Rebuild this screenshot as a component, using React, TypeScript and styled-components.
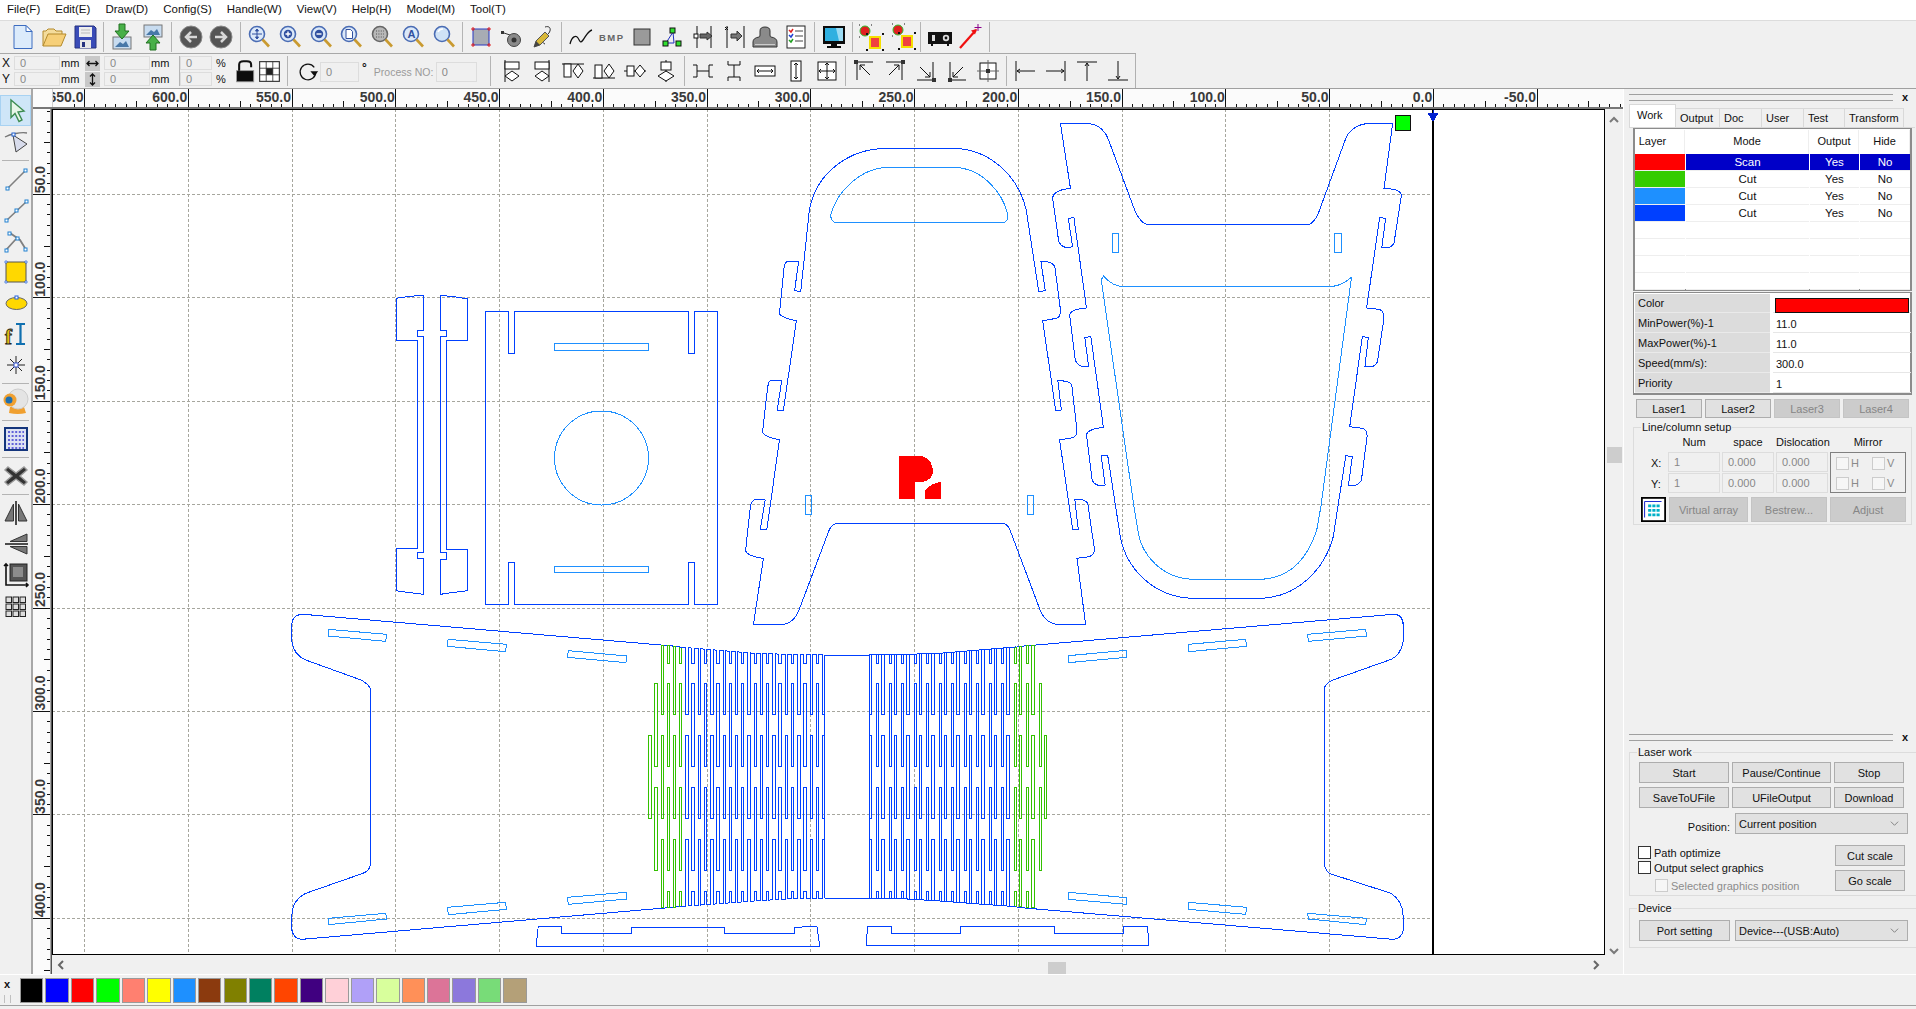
import React from "react";
import styled, { createGlobalStyle } from "styled-components";

const GlobalStyle = createGlobalStyle`
  html, body { margin: 0; padding: 0; background: #f0f0f0; overflow: hidden; }
  body { font-family: "Liberation Sans", Arial, sans-serif; font-size: 11px; color: #111; }
  * { box-sizing: border-box; }
`;

const Page = styled.div`
  width: 1916px;
  height: 1009px;
  display: flex;
  flex-direction: column;
  overflow: hidden;
`;

/* ---------- menu + toolbars ---------- */

const MenuBar = styled.div`
  height: 21px;
  background: #fff;
  display: flex;
  align-items: center;
  gap: 15px;
  padding: 0 0 2px 7px;
  font-size: 11.5px;
  border-bottom: 1px solid #dcdcdc;
`;

const ToolRow = styled.div`
  height: 33px;
  width: 1136px;
  display: flex;
  align-items: center;
  padding-left: 7.6px;
  border-bottom: 1px solid #a8a8a8;
`;

const PropRow = styled.div`
  height: 34px;
  width: 1136px;
  display: flex;
  align-items: center;
  border-right: 1px solid #b0b0b0;
`;

const IconCell = styled.div<{ $w?: number }>`
  width: ${(p) => p.$w ?? 30.8}px;
  height: 30px;
  flex: none;
  display: flex;
  align-items: center;
  justify-content: center;
`;

const BarSep = styled.div<{ $w?: number }>`
  width: ${(p) => p.$w ?? 6.8}px;
  height: 30px;
  flex: none;
  display: flex;
  justify-content: center;
  &::after {
    content: "";
    width: 1px;
    background: #b4b4b4;
  }
`;

const CoordGrid = styled.div`
  width: 178px;
  flex: none;
  display: grid;
  grid-template-columns: 14px 46px 25px 19px 46px 28px;
  grid-auto-rows: 16px;
  align-items: center;
`;

const CoordLabel = styled.span`
  font-size: 12px;
  padding-left: 2px;
`;

const FlatInput = styled.div<{ $h?: number; $w?: number }>`
  height: ${(p) => p.$h ?? 14}px;
  ${(p) => (p.$w ? `width: ${p.$w}px; flex: none;` : "")}
  background: #f0f0f0;
  border: 1px solid #dddddd;
  color: #888;
  font-size: 11px;
  padding-left: 5px;
  display: flex;
  align-items: center;
`;

const Unit = styled.span`
  font-size: 11px;
  padding-left: 1px;
`;

const Toggle = styled.div`
  width: 15px;
  height: 15px;
  background: #c8c8c8;
  display: flex;
  align-items: center;
  justify-content: center;
  font-size: 11px;
  font-weight: 700;
`;

const PercentGrid = styled.div`
  width: 54px;
  flex: none;
  display: grid;
  grid-template-columns: 32px 22px;
  grid-auto-rows: 16px;
  align-items: center;
`;

const Percent = styled.span`
  padding-left: 4px;
  font-size: 11px;
`;

const RotateGroup = styled.div`
  width: 193px;
  flex: none;
  display: flex;
  align-items: center;
  padding-left: 3px;
  padding-top: 2px;
`;

const Degree = styled.span`
  font-size: 12px;
  margin: -8px 7px 0 3px;
  font-weight: 700;
`;

const ProcessLabel = styled.span`
  color: #9a9a9a;
  white-space: nowrap;
  width: 62px;
  flex: none;
  font-size: 10.5px;
`;

/* ---------- main work area ---------- */

const Main = styled.div`
  height: 886px;
  display: flex;
  border-top: 1px solid #a0a0a0;
`;

const SideBar = styled.div`
  width: 33px;
  flex: none;
  border-right: 2px solid #a8a8a8;
  padding-top: 6px;
  display: flex;
  flex-direction: column;
`;

const SideButton = styled.div<{ $active?: boolean }>`
  height: 31px;
  width: 31px;
  flex: none;
  display: flex;
  align-items: center;
  justify-content: center;
  background: ${(p) => (p.$active ? "#cfe6f8" : "transparent")};
  border: ${(p) => (p.$active ? "1px solid #a8d2f2" : "none")};
`;

const SideSep = styled.div`
  height: 1px;
  flex: none;
  margin: 2.5px 2px;
  background: #b4b4b4;
`;

const Workspace = styled.div`
  width: 1590px;
  flex: none;
  display: grid;
  grid-template-columns: 19px 1553px 18px;
  grid-template-rows: 20px 846px 19px;
`;

const TopRuler = styled.svg`
  grid-column: 1 / 4;
  display: block;
  background: #fbfbfb;
`;

const LeftRuler = styled.svg`
  grid-row: 2 / 4;
  display: block;
  background: #fbfbfb;
`;

const CanvasSvg = styled.svg`
  display: block;
  background: #fff;
`;

const VScroll = styled.div`
  display: flex;
  flex-direction: column;
  align-items: center;
  padding: 6px 0 18px;
  height: 865px;
  grid-row: 2 / 4;
  grid-column: 3;
`;

const VThumb = styled.div`
  width: 15px;
  height: 16px;
  background: #cdcdcd;
  margin: 322px 0 auto;
`;

const HScroll = styled.div`
  display: flex;
  align-items: center;
  padding: 0 4px;
  grid-column: 2;
  grid-row: 3;
`;

const HThumb = styled.div`
  width: 18px;
  height: 12px;
  background: #cdcdcd;
  margin: 7px auto 0 982px;
  align-self: flex-start;
`;

/* ---------- right hand docks ---------- */

const Dock = styled.div`
  width: 293px;
  flex: none;
  border-left: 1px solid #fff;
  display: flex;
  flex-direction: column;
  height: 886px;
  border-bottom: 1px solid #a0a0a0;
`;

const DockPane = styled.div<{ $h: number }>`
  height: ${(p) => p.$h}px;
  flex: none;
  padding-left: 5px;
`;

const Grip = styled.div`
  height: 16px;
  display: flex;
  align-items: center;
  position: relative;
  &::before {
    content: "";
    flex: 1;
    height: 5px;
    margin-right: 9px;
    border-top: 1px solid #a0a0a0;
    border-bottom: 1px solid #a0a0a0;
  }
`;

const CloseMark = styled.span`
  font-weight: 700;
  font-size: 11px;
  width: 14px;
  line-height: 10px;
`;

const TabStrip = styled.div`
  display: flex;
  align-items: flex-end;
  height: 23px;
  border-bottom: 1px solid #d9d9d9;
  margin-right: 1px;
`;

const Tab = styled.div<{ $w: number; $active?: boolean }>`
  width: ${(p) => p.$w}px;
  height: ${(p) => (p.$active ? 23 : 19)}px;
  background: ${(p) => (p.$active ? "#fff" : "#f0f0f0")};
  border: 1px solid #d9d9d9;
  border-bottom: none;
  margin-right: -1px;
  padding-left: ${(p) => (p.$active ? 7 : 4)}px;
  line-height: ${(p) => (p.$active ? 20 : 18)}px;
  font-size: 11px;
`;

const TableFrame = styled.div`
  margin: 0 0 0 4px;
  width: 279px;
  height: 163px;
  border: 2px solid #8c8c8c;
  border-top-width: 1px;
  background: #fff;
  display: grid;
  grid-template-columns: 50px 123px 49px 50px;
  column-gap: 1px;
  grid-template-rows: 24px repeat(8, 17px);
  padding-top: 1px;
`;

const HeadCell = styled.div<{ $lead?: boolean }>`
  display: flex;
  align-items: center;
  justify-content: center;
  font-size: 11px;
  border-right: 1px solid #eee;
  padding-bottom: 2px;
  padding-right: ${(p) => (p.$lead ? 14 : 0)}px;
`;

const BodyCell = styled.div<{ $sel?: boolean; $color?: string }>`
  display: flex;
  align-items: center;
  justify-content: center;
  font-size: 11.5px;
  margin-bottom: 1px;
  background: ${(p) => p.$color ?? (p.$sel ? "#0000c8" : "#fff")};
  color: ${(p) => (p.$sel ? "#fff" : "#111")};
  box-shadow: 0 1px 0 #eeeeee;
`;

const PropFrame = styled.div`
  margin: 1px 0 0 4px;
  width: 279px;
  height: 103px;
  border: 2px solid #8c8c8c;
  border-top-width: 1px;
  border-left-width: 1px;
  background: #fff;
  display: grid;
  grid-template-columns: 135px 138px;
  column-gap: 3px;
  grid-template-rows: 19px repeat(4, 20px);
  padding: 1px 0 0 1px;
`;

const PropLabel = styled.div`
  background: #dcdcdc;
  display: flex;
  align-items: center;
  padding-left: 3px;
  font-size: 11px;
  border-bottom: 1px solid #eaeaea;
`;

const PropValue = styled.div`
  display: flex;
  align-items: center;
  padding: 3px 0 0 3px;
  font-size: 11px;
  border-bottom: 1px solid #e6e6e6;
`;

const ColorBar = styled.div`
  width: 134px;
  height: 15px;
  margin: 1px 0 0 -1px;
  background: #ff0000;
  border: 1px solid #111;
`;

const LaserRow = styled.div`
  display: flex;
  gap: 3px;
  margin: 4px 0 0 7px;
`;

const PanelButton = styled.div<{ $w?: number; $h?: number; $off?: boolean }>`
  ${(p) => (p.$w ? `width: ${p.$w}px; flex: none;` : "")}
  height: ${(p) => p.$h ?? 21}px;
  background: ${(p) => (p.$off ? "#cccccc" : "#e1e1e1")};
  border: 1px solid ${(p) => (p.$off ? "#c4c4c4" : "#adadad")};
  color: ${(p) => (p.$off ? "#868686" : "#111")};
  display: flex;
  align-items: center;
  justify-content: center;
  font-size: 11px;
  white-space: nowrap;
`;

const GroupBox = styled.fieldset<{ $h: number; $w: number; $top: number; $left?: number }>`
  margin: ${(p) => p.$top}px 0 0 ${(p) => p.$left ?? 0}px;
  padding: 0;
  width: ${(p) => p.$w}px;
  height: ${(p) => p.$h}px;
  border: 1px solid #dcdcdc;
  min-width: 0;
`;

const GroupTitle = styled.legend`
  margin-left: 7px;
  padding: 0 1px;
  font-size: 11px;
  line-height: 12px;
`;

const SetupGrid = styled.div`
  display: grid;
  grid-template-columns: 32px 52px 52px 52px 76px;
  column-gap: 2px;
  grid-template-rows: 15px 20px 20px;
  row-gap: 1px;
  padding-top: 3px;
`;

const ColTitle = styled.div`
  text-align: center;
  font-size: 11px;
`;

const RowMark = styled.div`
  font-size: 11px;
  padding: 5px 0 0 17px;
`;

const MirrorBox = styled.div`
  grid-column: 5;
  grid-row: 2 / 4;
  border: 1px solid #808080;
  display: grid;
  grid-template-columns: 36px 36px;
  grid-template-rows: 20px 20px;
  padding-left: 5px;
  align-items: center;
`;

const MirrorItem = styled.div`
  display: flex;
  align-items: center;
  gap: 2px;
  color: #8a8a8a;
  font-size: 11px;
`;

const CheckBox = styled.div<{ $off?: boolean }>`
  width: 13px;
  height: 13px;
  flex: none;
  background: ${(p) => (p.$off ? "#f6f6f6" : "#fff")};
  border: 1px solid ${(p) => (p.$off ? "#cccccc" : "#333")};
`;

const ArrayRow = styled.div`
  display: flex;
  align-items: center;
  margin: 4px 0 0 7px;
  gap: 3px;
`;

const ArrayIcon = styled.div`
  width: 26px;
  height: 25px;
  flex: none;
  margin-right: -1px;
`;

const WorkGrid = styled.div`
  display: grid;
  grid-template-columns: 90px 99px 70px;
  grid-auto-rows: 21px;
  gap: 4px 3px;
  margin: 4px 0 0 9px;
`;

const PositionRow = styled.div`
  display: flex;
  align-items: center;
  margin-top: 5px;
  height: 21px;
`;

const PositionLabel = styled.div`
  width: 100px;
  text-align: right;
  font-size: 11px;
  padding-top: 6px;
`;

const SelectBox = styled.div`
  width: 173px;
  height: 21px;
  margin-left: 5px;
  flex: none;
  background: #e1e1e1;
  border: 1px solid #adadad;
  display: flex;
  align-items: center;
  justify-content: space-between;
  padding: 0 8px 0 3px;
  font-size: 11px;
`;

const ScaleArea = styled.div`
  display: flex;
  justify-content: space-between;
  margin: 11px 0 0 8px;
  width: 267px;
`;

const CheckColumn = styled.div`
  display: flex;
  flex-direction: column;
`;

const CheckLine = styled.div<{ $off?: boolean; $indent?: boolean }>`
  display: flex;
  align-items: center;
  gap: 3px;
  height: 15px;
  font-size: 11px;
  color: ${(p) => (p.$off ? "#8c8c8c" : "#111")};
  ${(p) => (p.$indent ? "margin: 3px 0 0 17px;" : "")}
`;

const ScaleColumn = styled.div`
  display: flex;
  flex-direction: column;
  gap: 4px;
`;

const DeviceRow = styled.div`
  display: flex;
  margin: 6px 0 0 9px;
`;

/* ---------- colour palette ---------- */

const BottomBar = styled.div`
  height: 32px;
  display: flex;
  align-items: flex-start;
  border-top: 1px solid #fff;
  border-bottom: 1px solid #a0a0a0;
  flex: none;
`;

const PaletteGrip = styled.div`
  width: 20px;
  flex: none;
  padding: 4px 0 0 4px;
  font-weight: 700;
  font-size: 11px;
  line-height: 10px;
  &::after {
    content: "";
    display: block;
    width: 5px;
    height: 8px;
    margin-top: 6px;
    border-left: 1px solid #c0c0c0;
    border-right: 1px solid #c0c0c0;
  }
`;

const Swatches = styled.div`
  display: grid;
  grid-template-columns: repeat(20, 23.4px);
  column-gap: 2.05px;
  margin-top: 3px;
`;

const Swatch = styled.div<{ $c: string }>`
  height: 25px;
  background: ${(p) => p.$c};
  border: 1px solid #9a9a9a;
`;

/* ---------- icons ---------- */

const IconSvg = styled.svg`
  display: block;
`;

const Ic = ({ s = 28, children }: { s?: number; children: React.ReactNode }) => (
  <IconSvg width={s} height={s} viewBox="0 0 28 28">
    {children}
  </IconSvg>
);

const Mag = ({ children, lens = "#dbe8f8", ring = "#4a6cb4" }: { children?: React.ReactNode; lens?: string; ring?: string }) => (
  <Ic>
    <circle cx="12" cy="11" r="7.5" fill={lens} stroke={ring} strokeWidth="1.6" />
    <line x1="17.5" y1="16.5" x2="24" y2="23.5" stroke="#c99a30" strokeWidth="2.6" />
    {children}
  </Ic>
);

const L = ({ d, w = 1, c = "#111" }: { d: string; w?: number; c?: string }) => (
  <path d={d} fill="none" stroke={c} strokeWidth={w} />
);

const Apple = ({ x, y }: { x: number; y: number }) => (
  <g transform={`translate(${x} ${y})`}>
    <circle cx="6" cy="7" r="5" fill="#e02020" stroke="#30c030" strokeWidth="1" />
    <path d="M0 1h1M12 1h1M0 13h1" stroke="#111" />
  </g>
);

const Selected = ({ x, y }: { x: number; y: number }) => (
  <g transform={`translate(${x} ${y})`}>
    <rect x="0" y="0" width="10" height="11" fill="#f04040" stroke="#f5e000" strokeWidth="2" />
    <path d="M-4 -3h2M12 -3h2M-4 13h2M12 13h2" stroke="#111" strokeWidth="2" />
  </g>
);

const topIcons: React.ReactNode[][] = [
  [
    <Ic key="new"><path d="M5 2.5h12l6 6v17H5z" fill="#dcebfb" stroke="#3c6cc0" /><path d="M17 2.5v6h6z" fill="#fff" stroke="#3c6cc0" /></Ic>,
    <Ic key="open"><path d="M3 23V8h3l2-2h6l2 2h6v3" fill="#f4dc9c" stroke="#b48a2c" /><path d="M3 23l5-12h18l-5 12z" fill="#f6cf78" stroke="#b48a2c" /></Ic>,
    <Ic key="save"><path d="M4 3h19l2 2v20H4z" fill="#3a4cb8" stroke="#26337f" /><rect x="8" y="4" width="13" height="10" fill="#eeeeee" /><path d="M10 7h9M10 10h9" stroke="#bbb" /><rect x="9" y="17" width="11" height="8" fill="#e8e8e8" /><rect x="11" y="19" width="3" height="5" fill="#26337f" /></Ic>,
  ],
  [
    <Ic key="imp"><rect x="5" y="14" width="18" height="12" fill="#c8dcf0" stroke="#777" /><path d="M7 24l5-5 3 2 3-3 3 6z" fill="#4878a8" /><path d="M11 1h6v7h4l-7 8-7-8h4z" fill="#48b048" stroke="#207020" /></Ic>,
    <Ic key="exp"><rect x="5" y="2" width="18" height="12" fill="#c8dcf0" stroke="#777" /><path d="M7 12l5-5 3 2 3-3 3 6z" fill="#4878a8" /><path d="M11 27v-7H7l7-8 7 8h-4v7z" fill="#48b048" stroke="#207020" /></Ic>,
  ],
  [
    <Ic key="back"><circle cx="14" cy="14" r="11" fill="#555" stroke="#8a8a8a" /><path d="M20 14H10M14 9l-5 5 5 5" fill="none" stroke="#d8d8d8" strokeWidth="2.5" /></Ic>,
    <Ic key="fwd"><circle cx="14" cy="14" r="11" fill="#555" stroke="#8a8a8a" /><path d="M8 14h10M14 9l5 5-5 5" fill="none" stroke="#d8d8d8" strokeWidth="2.5" /></Ic>,
  ],
  [
    <Mag key="z1"><path d="M12 6v10M7 11h10M12 6l-1.5 2h3zM12 16l-1.5-2h3z" stroke="#3050a0" fill="#3050a0" /></Mag>,
    <Mag key="z2"><circle cx="12" cy="11" r="4.2" fill="#3050a0" /><path d="M12 8.5v5M9.5 11h5" stroke="#fff" strokeWidth="1.4" /></Mag>,
    <Mag key="z3"><circle cx="12" cy="11" r="4.2" fill="#3050a0" /><path d="M9.5 11h5" stroke="#fff" strokeWidth="1.4" /></Mag>,
    <Mag key="z4"><path d="M9 6.5h4.5l2 2V15.5H9z" fill="#fff" stroke="#3050a0" /></Mag>,
    <Mag key="z5" lens="#b8b8b8" ring="#666"><path d="M8 8h8M8 11h8M8 14h8" stroke="#555" strokeDasharray="1 1.4" /></Mag>,
    <Mag key="z6"><text x="8.4" y="15" fontSize="11" fontWeight="700" fontFamily="Liberation Sans" fill="#3050a0">A</text></Mag>,
    <Mag key="z7" lens="#cfe2f6"><path d="M8 9a5 5 0 0 1 5-3" stroke="#fff" fill="none" strokeWidth="1.5" /></Mag>,
  ],
  [
    <Ic key="rect"><rect x="6" y="6" width="16" height="16" fill="#a8acb4" stroke="#2838c0" /><path d="M4 6h4M6 4v4M20 6h4M22 4v4M4 22h4M6 20v4M20 22h4M22 20v4" stroke="#e02020" /></Ic>,
    <Ic key="cam"><rect x="3" y="8" width="3" height="3" fill="#333" /><path d="M6 10l6 2" stroke="#333" /><circle cx="16" cy="17" r="6.5" fill="#8a8a8a" stroke="#444" /><circle cx="16" cy="17" r="2.5" fill="#333" /></Ic>,
    <Ic key="pen"><path d="M16 4c6-2 7 4 2 8-4 3-6 8-2 9" fill="none" stroke="#333" /><path d="M5 24l2-6 9-9 4 4-9 9z" fill="#d8b838" stroke="#555" /><path d="M5 24l2-6 4 4z" fill="#444" /></Ic>,
  ],
  [
    <Ic key="curve"><L d="M3 21c2-8 6-9 8-6s2 6 5 2 5-9 9-10" w={1.3} /></Ic>,
    <Ic key="bmp"><text x="2" y="18" fontSize="9.5" fontWeight="700" fontFamily="Liberation Sans" fill="#666" textLength="24">BMP</text></Ic>,
    <Ic key="gray"><rect x="6" y="6" width="16" height="16" fill="#9a9a9a" stroke="#333" /></Ic>,
    <Ic key="tree"><path d="M14 9l-7 11M14 9l1 11M15 20h-8" fill="none" stroke="#2030c0" /><rect x="11" y="5" width="5" height="5" fill="#30e030" stroke="#111" /><rect x="4" y="18" width="5" height="5" fill="#30e030" stroke="#111" /><rect x="17" y="18" width="5" height="5" fill="#30e030" stroke="#111" /></Ic>,
    <Ic key="dist1"><L d="M7 3v22M21 3v22" /><rect x="4" y="11" width="4" height="4" fill="#fff" stroke="#111" /><path d="M10 11h7v-2l5 4-5 4v-2h-7z" fill="#666" stroke="#333" /></Ic>,
    <Ic key="dist2"><L d="M6 3v22M23 3v22" /><path d="M4 4l3 3M7 4l-3 3" stroke="#111" /><path d="M10 11h6v-3l5 5-5 5v-3h-6z" fill="#777" stroke="#333" /></Ic>,
    <Ic key="stamp"><path d="M2 24v-5q0-4 6-5 1 0 1-2V8q0-4 5-4t5 4v4q0 2 1 2 6 1 6 5v5z" fill="#8a8a8a" stroke="#333" /><rect x="4" y="21" width="20" height="1" fill="#ccc" /></Ic>,
    <Ic key="list"><rect x="5" y="3" width="18" height="22" fill="#fff" stroke="#222" /><path d="M13 8h8M13 13h8M13 18h8" stroke="#444" /><path d="M7 7l2 2 2-3" fill="none" stroke="#e02020" strokeWidth="1.5" /><path d="M7 12l2 2 2-3" fill="none" stroke="#2040d0" strokeWidth="1.5" /><path d="M7 17l2 2 2-3" fill="none" stroke="#20a020" strokeWidth="1.5" /></Ic>,
  ],
  [
    <Ic key="mon"><rect x="3" y="3" width="22" height="18" fill="#0c0c0c" /><rect x="5" y="5" width="18" height="13" fill="#30b0e0" /><path d="M16 5l3 13h4V5z" fill="#9cdcf4" /><path d="M11 21h6v2h4v2H7v-2h4z" fill="#0c0c0c" /></Ic>,
  ],
  [
    <Ic key="ap1"><Apple x={2} y={1} /><Selected x={13} y={14} /></Ic>,
    <Ic key="ap2"><Apple x={4} y={0} /><Selected x={14} y={13} /></Ic>,
  ],
  [
    <Ic key="proj"><path d="M2 9h24v12H2z" fill="#111" /><rect x="6" y="12" width="3" height="6" fill="#ddd" /><circle cx="20" cy="15" r="3.2" fill="#ddd" /><circle cx="20" cy="15" r="1.4" fill="#111" /><path d="M6 21v2M22 21v2" stroke="#111" strokeWidth="2" /></Ic>,
    <Ic key="laser"><path d="M4 25L20 7" stroke="#f01010" strokeWidth="2.2" /><path d="M21 6l-6 1.5 4 4z" fill="#f01010" /><path d="M22 1v7M18.5 4.5h7" stroke="#8b008b" /></Ic>,
  ],
];

const alignIcons: React.ReactNode[][] = [
  [
    <Ic key="a1"><L d="M8 3v22" /><rect x="8" y="5" width="14" height="7" fill="#fff" stroke="#111" /><path d="M8 19l7-5 7 5-7 5z" fill="#fff" stroke="#111" /></Ic>,
    <Ic key="a2"><L d="M21 3v22" /><rect x="7" y="5" width="14" height="7" fill="#fff" stroke="#111" /><path d="M7 19l7-5 7 5-7 5z" fill="#fff" stroke="#111" /></Ic>,
    <Ic key="a3"><L d="M3 7h22" /><rect x="5" y="7" width="7" height="13" fill="#fff" stroke="#111" /><path d="M19 7l5 7-5 7-5-7z" fill="#fff" stroke="#111" /></Ic>,
    <Ic key="a4"><L d="M3 21h22" /><rect x="5" y="8" width="7" height="13" fill="#fff" stroke="#111" /><path d="M19 7l5 7-5 7-5-7z" fill="#fff" stroke="#111" /></Ic>,
    <Ic key="a5"><L d="M3 14h22" /><rect x="6" y="9" width="7" height="10" fill="#fff" stroke="#111" /><path d="M19 8l5 6-5 6-5-6z" fill="#fff" stroke="#111" /></Ic>,
    <Ic key="a6"><L d="M14 3v22" /><rect x="9" y="5" width="10" height="8" fill="#fff" stroke="#111" /><path d="M6 19l8-5 8 5-8 5z" fill="#fff" stroke="#111" /></Ic>,
  ],
  [
    <Ic key="s1"><L d="M4 8h4v12H4M24 8h-4v12h4M8 14h12" /></Ic>,
    <Ic key="s2"><L d="M8 4v4h12V4M8 24v-4h12v4M14 8v12" /></Ic>,
    <Ic key="s3"><rect x="4" y="9" width="20" height="10" fill="#fff" stroke="#111" /><L d="M6 14h16M6 14l2-2M6 14l2 2M22 14l-2-2M22 14l-2 2" /></Ic>,
    <Ic key="s4"><rect x="9" y="4" width="10" height="20" fill="#fff" stroke="#111" /><L d="M14 6v16M14 6l-2 2M14 6l2 2M14 22l-2-2M14 22l2-2" /></Ic>,
    <Ic key="s5"><rect x="5" y="5" width="18" height="18" fill="#fff" stroke="#111" /><L d="M14 6v16M6 14h16M14 6l-2 2M14 6l2 2M14 22l-2-2M14 22l2-2M6 14l2-2M6 14l2 2M22 14l-2-2M22 14l-2 2" /></Ic>,
  ],
  [
    <Ic key="c1"><L d="M5 5h18M7 5v18M10 8l10 10M10 8h5M10 8v5" /><rect x="4" y="3" width="4" height="4" fill="#333" /></Ic>,
    <Ic key="c2"><L d="M5 5h18M21 5v18M18 8L8 18M18 8h-5M18 8v5" /><rect x="20" y="3" width="4" height="4" fill="#333" /></Ic>,
    <Ic key="c3"><L d="M5 23h18M21 5v18M18 20L8 10M18 20h-5M18 20v-5" /><rect x="20" y="21" width="4" height="4" fill="#333" /></Ic>,
    <Ic key="c4"><L d="M5 23h18M7 5v18M10 20l10-10M10 20h5M10 20v-5" /><rect x="5" y="21" width="4" height="4" fill="#333" /></Ic>,
    <Ic key="c5"><rect x="6" y="6" width="16" height="16" fill="#fff" stroke="#111" /><L d="M14 3v22M3 14h22" c="#666" /><rect x="12" y="12" width="4" height="4" fill="#333" /></Ic>,
  ],
  [
    <Ic key="e1"><L d="M5 4v20M6 14h18M6 14l3-2M6 14l3 2" /></Ic>,
    <Ic key="e2"><L d="M23 4v20M4 14h18M22 14l-3-2M22 14l-3 2" /></Ic>,
    <Ic key="e3"><L d="M4 5h20M14 6v18M14 6l-2 3M14 6l2 3" /></Ic>,
    <Ic key="e4"><L d="M4 23h20M14 4v18M14 22l-2-3M14 22l2-3" /></Ic>,
  ],
];

const sideIcons: Record<string, React.ReactNode> = {
  arrow: <Ic><path d="M9 3l13 11-6 1 4 8-3 1.5-4-8-4 4z" fill="#e8f6e8" stroke="#3c8c50" strokeWidth="1.4" /></Ic>,
  node: <Ic><path d="M3 9c5-3 16-5 22-4" fill="none" stroke="#777" strokeWidth="1.3" /><path d="M11 7l14 9-11 8z" fill="#d8dcec" stroke="#444" /><rect x="10" y="5" width="3" height="3" fill="#fff" stroke="#2060d0" /></Ic>,
  line: <Ic><L d="M6 23L23 6" c="#808080" w={1.6} /><rect x="4" y="22" width="3" height="3" fill="#fff" stroke="#2080d0" /><rect x="22" y="4" width="3" height="3" fill="#fff" stroke="#2080d0" /></Ic>,
  poly: <Ic><L d="M5 24L24 6" c="#808080" w={1.6} /><rect x="3" y="23" width="3" height="3" fill="#fff" stroke="#2080d0" /><rect x="13" y="13" width="3" height="3" fill="#fff" stroke="#2080d0" /><rect x="23" y="4" width="3" height="3" fill="#fff" stroke="#2080d0" /></Ic>,
  bezier: <Ic><L d="M4 23L14 12M8 6l10 7 5 8" c="#808080" w={1.8} /><rect x="3" y="22" width="3" height="3" fill="#fff" stroke="#2080d0" /><rect x="6" y="5" width="3" height="3" fill="#fff" stroke="#2080d0" /><rect x="14" y="10" width="3" height="3" fill="#fff" stroke="#2080d0" /><rect x="22" y="21" width="3" height="3" fill="#fff" stroke="#2080d0" /></Ic>,
  rect: <Ic><rect x="4" y="4" width="20" height="20" fill="#ffd800" stroke="#555" /><path d="M3 3h2v2H3zM23 3h2v2h-2zM3 23h2v2H3zM23 23h2v2h-2z" fill="#fff" stroke="#2060e0" strokeWidth=".7" /></Ic>,
  ellipse: <Ic><ellipse cx="14.5" cy="14.5" rx="10.5" ry="6" fill="#ffd800" stroke="#666" /><rect x="13" y="7" width="3" height="3" fill="#fff" stroke="#2060e0" /></Ic>,
  text: <Ic><text x="3" y="24" fontSize="21" fontWeight="700" fontFamily="Liberation Serif" fill="#e8c010" stroke="#222" strokeWidth=".8">f</text><path d="M14 4h9M14 24h9M18.5 4v20" fill="none" stroke="#1070b0" strokeWidth="2.2" /></Ic>,
  star: <Ic><path d="M14 5v18M5 14h18M8 8l12 12M20 8L8 20" stroke="#222" /><rect x="12" y="12" width="4" height="4" fill="#fff" stroke="#3050d0" /></Ic>,
  camera: <Ic><path d="M7 25l1-6h14l2 6q-8 2-17 0z" fill="#f0a030" /><circle cx="16" cy="11" r="10" fill="#e4e4e4" stroke="#ccc" /><circle cx="8" cy="12" r="6.5" fill="#f0a030" /><circle cx="7" cy="12" r="3.5" fill="#2070b0" /></Ic>,
  grid: <Ic><rect x="3" y="3" width="22" height="22" fill="#dde2f2" stroke="#14357c" strokeWidth="2" /><path d="M6 7h16M6 11h16M6 15h16M6 19h16M6 23h16" stroke="#3838d0" strokeWidth="1.6" strokeDasharray="2 1.6" /></Ic>,
  cross: <Ic><path d="M6 5l8 6 8-6 3 3-7 6 7 6-3 3-8-6-8 6-3-3 7-6-7-6z" fill="#333" stroke="#999" strokeWidth="1.4" /></Ic>,
  mirrorH: <Ic><path d="M14 2v24" stroke="#222" strokeWidth="1.6" /><path d="M11.5 5v17H3zM16.5 5v17H25z" fill="#777" stroke="#333" /></Ic>,
  mirrorV: <Ic><path d="M3 14h23" stroke="#222" strokeWidth="1.6" /><path d="M25 4v7.5H8zM25 16.5V24L8 16.5z" fill="#777" stroke="#333" /></Ic>,
  array: <Ic><rect x="8" y="3" width="17" height="17" fill="#555" stroke="#222" /><rect x="11" y="6" width="10" height="10" fill="#8c8c8c" /><L d="M4 3v21h22M2 5l2-2 2 2M24 22l2 2-2 2" w={1.6} /></Ic>,
  grid2: <Ic>{[5, 12, 19].map((y) => [4, 11, 18].map((x) => <rect key={`${x}-${y}`} x={x} y={y} width="5.5" height="5.5" fill="#ddd" stroke="#222" />))}</Ic>,
};

const Chevron = ({ c = "#7a7a7a", w = 1, size = 10, up, left, right }: { c?: string; w?: number; size?: number; up?: boolean; left?: boolean; right?: boolean }) => (
  <IconSvg width={size} height={size} viewBox="0 0 10 10">
    <polyline
      points={up ? "1,7 5,3 9,7" : left ? "7,1 3,5 7,9" : right ? "3,1 7,5 3,9" : "1,3 5,7 9,3"}
      fill="none"
      stroke={c}
      strokeWidth={w}
    />
  </IconSvg>
);

/* ---------- rulers + drawing ---------- */

const xTick = (i: number) => 84.5 + 103.75 * i;
const yTick = (i: number) => 194.3 + 103.43 * i;
const xLabels = ["650.0", "600.0", "550.0", "500.0", "450.0", "400.0", "350.0", "300.0", "250.0", "200.0", "150.0", "100.0", "50.0", "0.0", "-50.0"];
const yLabels = ["50.0", "100.0", "150.0", "200.0", "250.0", "300.0", "350.0", "400.0"];

const rulerText = { fontFamily: "Liberation Sans", fontSize: 14, fontWeight: 700, fill: "#3a3a3a" };

const HorizontalRuler = () => {
  const ticks: React.ReactNode[] = [];
  for (let i = -1; i < 160; i++) {
    const x = 84.5 + (103.75 / 10) * i;
    if (x < 52 || x > 1622) continue;
    const major = i % 10 === 0;
    const mid = i % 5 === 0;
    ticks.push(
      <line key={i} x1={x} x2={x} y1={major ? 89 : mid ? 101 : 104} y2={107} stroke="#111" shapeRendering="crispEdges" />
    );
  }
  return (
    <TopRuler width={1590} height={20} viewBox="33 89 1590 20">
      <rect x="52" y="89" width="1" height="20" fill="#cfcfcf" />
      {ticks}
      <g clipPath="url(#topClip)">
        {xLabels.map((t, i) => (
          <text key={t} x={xTick(i) - 1} y={102} textAnchor="end" {...rulerText}>
            {t}
          </text>
        ))}
      </g>
      <clipPath id="topClip">
        <rect x="53" y="89" width="1570" height="20" />
      </clipPath>
      <rect x="33" y="107" width="1590" height="2" fill="#777" />
    </TopRuler>
  );
};

const VerticalRuler = () => {
  const ticks: React.ReactNode[] = [];
  for (let i = -8; i < 80; i++) {
    const y = 194.3 + (103.43 / 10) * i;
    if (y < 110 || y > 973) continue;
    const major = i % 10 === 0;
    const mid = i % 5 === 0;
    ticks.push(
      <line key={i} x1={major ? 33 : mid ? 44 : 47} x2={50} y1={y} y2={y} stroke="#111" shapeRendering="crispEdges" />
    );
  }
  return (
    <LeftRuler width={19} height={865} viewBox="33 109 19 865">
      {ticks}
      {yLabels.map((t, i) => (
        <text key={t} x={45} y={yTick(i) - 1} textAnchor="start" transform={`rotate(-90 45 ${yTick(i) - 1})`} {...rulerText}>
          {t}
        </text>
      ))}
      <rect x="50.5" y="109" width="1.5" height="865" fill="#555" />
    </LeftRuler>
  );
};

const Line = ({ d, c = "#0040ff" }: { d: string; c?: string }) => (
  <path d={d} fill="none" stroke={c} strokeWidth={1} vectorEffect="non-scaling-stroke" />
);

const SKY = "#1e90ff";
const GREEN = "#33c000";

// each zoomed crop of the job was traced in its own scale
const Traced = ({ ox, oy, sx, sy = 3, children }: { ox: number; oy: number; sx: number; sy?: number; children: React.ReactNode }) => (
  <g transform={`translate(${ox} ${oy}) scale(${1 / sx} ${1 / sy})`}>{children}</g>
);

const lerp = (table: number[][], d: number) => {
  for (let i = 1; i < table.length; i++) {
    if (d <= table[i][0]) {
      const [a, av] = table[i - 1];
      const [b, bv] = table[i];
      return av + ((bv - av) * (d - a)) / (b - a);
    }
  }
  return table[table.length - 1][1];
};

const CENTER = 847.1;
const topEdge = (x: number) => lerp([[0, 655], [22, 655], [61, 654.3], [93, 653.3], [132, 650], [160, 647.7], [190, 645]], Math.abs(x - CENTER));
const bottomEdge = (x: number) => lerp([[0, 898], [22, 898], [61, 899], [93, 901], [132, 904], [160, 906], [190, 908.3]], Math.abs(x - CENTER));

type Col = { xl: number; type: "A" | "B"; green: boolean; edge: boolean };

const hingeColumns = (side: "L" | "R"): Col[] => {
  const cols: Col[] = [];
  for (let i = 0; i < 15; i++) {
    const xl = side === "L" ? 824.9 - 2.4 - 12.42 * i : 869.3 + 12.5 * i;
    cols.push({ xl, type: "A", green: i >= 12, edge: i === 14 });
  }
  for (let j = 0; j < 14; j++) {
    const xl = side === "L" ? 818.5 - 2.4 - 12.42 * j : 876.5 + 12.5 * j;
    cols.push({ xl, type: "B", green: j >= 11, edge: j === 13 });
  }
  return cols.sort((a, b) => a.xl - b.xl);
};

const box = (x: number, y1: number, y2: number) => `M${x} ${y1}V${y2}H${x + 2.4}V${y1}Z`;

const midSlots = (c: Col) =>
  c.type === "A" ? [[735, 818.3]] : [[683.3, 766.7], [787.3, 870.7]];

const firstDepth = (c: Col) => (c.type === "A" ? 714.3 : 663.3);
const lastDepth = (c: Col) => (c.type === "A" ? 839.3 : 891);

const serpentine = (cols: Col[], edge: (x: number) => number, depth: (c: Col) => number, startX: number, endX: number) => {
  let d = `M${startX} ${edge(startX)}`;
  cols.forEach((c) => {
    const y = depth(c);
    d += `L${c.xl} ${edge(c.xl)}V${y}H${c.xl + 2.4}V${edge(c.xl + 2.4)}`;
  });
  return `${d}L${endX} ${edge(endX)}`;
};

const Hinge = ({ side }: { side: "L" | "R" }) => {
  const cols = hingeColumns(side);
  const blue = cols.filter((c) => !c.green);
  const ordered = side === "L" ? blue : [...blue].reverse();
  const startX = side === "L" ? 679.6 : 1016;
  const endX = side === "L" ? 824.9 : 869.3;
  return (
    <g>
      {cols.map((c) => (
        <g key={c.xl}>
          {midSlots(c).map(([a, b]) => (
            <Line key={a} d={box(c.xl, a, b)} c={c.green ? GREEN : "#0040ff"} />
          ))}
          {c.green && !c.edge && (
            <>
              <Line d={box(c.xl, topEdge(c.xl), firstDepth(c))} c={GREEN} />
              <Line d={box(c.xl, lastDepth(c), bottomEdge(c.xl))} c={GREEN} />
            </>
          )}
        </g>
      ))}
      <Line d={serpentine(ordered, topEdge, firstDepth, startX, endX)} />
      <Line d={serpentine(ordered, bottomEdge, lastDepth, startX, endX)} />
      <Line d={`M${endX} 655V898`} />
    </g>
  );
};

const Drawing = () => {
  const vGrid = Array.from({ length: 13 }, (_, i) => xTick(i));
  const hGrid = Array.from({ length: 8 }, (_, i) => yTick(i));
  return (
    <CanvasSvg width={1553} height={846} viewBox="52 109 1553 846" shapeRendering="crispEdges">
      {vGrid.map((x) => (
        <line key={x} x1={x} x2={x} y1={109} y2={955} stroke="#a6a69e" strokeDasharray="3 2" />
      ))}
      {hGrid.map((y) => (
        <line key={y} x1={52} x2={1432} y1={y} y2={y} stroke="#a6a69e" strokeDasharray="3 2" />
      ))}
      <line x1="1432.5" x2="1432.5" y1="109" y2="955" stroke="#000" strokeWidth="2" />
      <path d="M1433 110v4M1428 113h10l-5 8z" fill="#0020d0" stroke="#0020d0" />

      {/* side struts + seat panel */}
      <Traced ox={380} oy={280} sx={3}>
        <Line d="M48 55L90 49L130 46V151H112V169H130V817H112V835H130V943L90 938L48 932V805H112V181H48Z" />
        <Line d="M181 46L222 50L263 57V181H199V808H263V932L222 937L181 943V838H199V817H181V169H199V151H181Z" />
        <Line d="M316 94H385V220H403V94H926V220H944V94H1013V973H944V847H926V973H403V847H385V973H316Z" />
        <Line d="M523 190H806V212H523Z" c={SKY} />
        <Line d="M523 859H806V878H523Z" c={SKY} />
        <circle cx="664.5" cy="534" r="141" fill="none" stroke={SKY} vectorEffect="non-scaling-stroke" />
      </Traced>

      {/* back + base */}
      <Traced ox={740} oy={110} sx={2.306}>
        <Line d="M31 1543H95C118 1543 130 1522 137 1497L205 1262Q211 1240 228 1240H603Q616 1240 622 1258L692 1500C700 1525 715 1543 735 1543H797L777 1345L805 1340Q818 1335 817 1315L802 1180Q797 1167 772 1168L780 1258H767L737 990L768 983Q778 975 777 960L765 825Q760 812 733 812L741 900L728 902L698 632L730 625Q740 620 739 600L726 470Q720 453 694 455L704 542L689 545L660 300C640 190 570 115 490 115H340C250 115 175 190 160 300L140 545L126 542L135 455H108Q102 460 101 480L91 610Q92 622 130 632L100 902L86 900L96 812H70Q65 815 63 840L52 965Q53 980 91 989L62 1258H47L58 1170L35 1167Q26 1175 24 1190L13 1320Q14 1338 54 1345Z" />
        <Line d="M218 337H610Q620 330 617 310C605 250 560 172 490 172H345C280 172 225 240 209 315Q210 332 218 337Z" c={SKY} />
        <Line d="M151 1156H165V1214H151Z" c={SKY} />
        <Line d="M663 1156H677V1214H663Z" c={SKY} />
        <path d="M367 1038H420Q445 1050 445 1085Q445 1110 417 1117H403V1167H367Z" fill="#ff0000" />
        <path d="M427 1167V1140Q440 1120 463 1116V1167Z" fill="#ff0000" />
        <Line d="M739 41H800C830 41 845 70 850 90L910 300C918 325 930 343 940 343H1310C1320 343 1332 320 1335 305L1397 85C1405 60 1425 41 1450 41H1505L1485 235L1510 238Q1525 245 1525 258L1508 400Q1500 418 1480 412L1489 325L1475 323L1445 594L1475 598Q1486 605 1485 625L1470 755Q1465 775 1441 770L1449 682L1435 680L1406 950L1435 955Q1447 960 1446 980L1433 1110Q1425 1132 1403 1127L1412 1040L1397 1037L1368 1280C1350 1370 1290 1465 1195 1465H1050C950 1465 890 1370 877 1280L848 1037L833 1038L842 1125Q820 1132 812 1110L799 975Q800 958 838 952L809 680L795 682L804 770Q780 775 773 750L760 615Q762 598 799 594L770 323L757 325L767 410Q745 420 735 395L721 265Q722 240 762 235Z" />
        <Line d="M838 498Q860 529 880 529H1365Q1385 529 1410 502L1340 1186L1330 1260C1310 1340 1270 1408 1195 1408H1050C970 1408 925 1330 918 1265L908 1186L833 510Z" c={SKY} />
        <Line d="M859 370H873V428H859Z" c={SKY} />
        <Line d="M1371 370H1387V428H1371Z" c={SKY} />
      </Traced>

      {/* long strip, left wing */}
      <Traced ox={280} oy={600} sx={2.529}>
        <Line d="M1012 140L60 43Q30 43 30 75V125Q35 165 65 180L205 240Q228 255 229 270V795Q225 815 205 822L65 880Q32 900 30 945V990Q35 1018 55 1018L1012 920" />
        {[
          "M122 88L270 103L267 124L122 108Z",
          "M425 118L573 133L570 155L423 139Z",
          "M729 152L877 168L875 188L727 172Z",
          "M122 955L267 940L270 957L122 974Z",
          "M423 922L570 907L573 928L426 944Z",
          "M727 892L875 877L877 897L729 913Z",
        ].map((d) => (
          <Line key={d} d={d} c={SKY} />
        ))}
        <Line d="M653 980H712V1000H889V982H1124V1000H1301V982L1358 979L1365 1039H648Z" />
      </Traced>

      {/* long strip, right wing */}
      <Traced ox={840} oy={600} sx={2.658}>
        <Line d="M470 140L1470 43Q1497 43 1497 75V125Q1490 165 1465 178L1310 240Q1288 250 1287 270V790Q1290 815 1305 822L1465 880Q1497 905 1497 950V990Q1492 1018 1470 1018L470 922" />
        {[
          "M607 167L762 151V172L607 188Z",
          "M926 133L1078 118L1081 139L926 155Z",
          "M1243 103L1397 88L1400 108L1245 124Z",
          "M607 877L762 893V913L607 898Z",
          "M926 907L1081 922L1078 943L926 928Z",
          "M1243 940L1400 955L1397 974L1245 957Z",
        ].map((d) => (
          <Line key={d} d={d} c={SKY} />
        ))}
        <Line d="M73 979H137V1000H321V979H570V1000H753V979H818L820 1036H70Z" />
      </Traced>

      <Hinge side="L" />
      <Hinge side="R" />
      <line x1="824.9" x2="869.3" y1="655" y2="655" stroke="#0040ff" />
      <line x1="824.9" x2="869.3" y1="898" y2="898" stroke="#0040ff" />

      <rect x="1395.5" y="115.5" width="15" height="15" fill="#00ff00" stroke="#111" />
      <rect x="52" y="109" width="1553" height="846" fill="none" stroke="#000" strokeWidth="2" />
    </CanvasSvg>
  );
};

/* ---------- data ---------- */

const menus = ["File(F)", "Edit(E)", "Draw(D)", "Config(S)", "Handle(W)", "View(V)", "Help(H)", "Model(M)", "Tool(T)"];

const tabs: [string, number][] = [["Work", 47], ["Output", 45], ["Doc", 43], ["User", 43], ["Test", 42], ["Transform", 60]];

const layers = [
  { color: "#ff0000", mode: "Scan", sel: true },
  { color: "#33cc00", mode: "Cut" },
  { color: "#1e90ff", mode: "Cut" },
  { color: "#0040ff", mode: "Cut" },
];

const params = [
  ["MinPower(%)-1", "11.0"],
  ["MaxPower(%)-1", "11.0"],
  ["Speed(mm/s):", "300.0"],
  ["Priority", "1"],
];

const swatches = [
  "#000000", "#0000ff", "#ff0000", "#00ff00", "#ff8070", "#ffff00", "#1e90ff", "#8b3a0e", "#808000", "#008060",
  "#ff4500", "#400080", "#ffd0d8", "#b0a0f8", "#d8ff9c", "#ff9058", "#dc7498", "#8c78dc", "#78dc78", "#b4a078",
];

const sideLayout: (string | null)[] = [
  "arrow", "node", null, "line", "poly", "bezier", "rect", "ellipse", "text", "star", null,
  "camera", null, "grid", null, "cross", null, "mirrorH", "mirrorV", "array", "grid2",
];

const ToolGroups = ({ groups, pitch, sep }: { groups: React.ReactNode[][]; pitch: number; sep: number }) => (
  <>
    {groups.map((group, g) => (
      <React.Fragment key={g}>
        {g > 0 && <BarSep $w={sep} />}
        {group.map((icon, i) => (
          <IconCell key={i} $w={pitch}>
            {icon}
          </IconCell>
        ))}
      </React.Fragment>
    ))}
  </>
);

const ToggleIcon = ({ vertical }: { vertical?: boolean }) => (
  <IconSvg width={13} height={13} viewBox="0 0 13 13">
    <path
      d={vertical ? "M6.5 1v11M4 3.5l2.5-2.5 2.5 2.5M4 9.5l2.5 2.5 2.5-2.5" : "M1 6.5h11M3.5 4L1 6.5 3.5 9M9.5 4L12 6.5 9.5 9"}
      fill="none"
      stroke="#111"
      strokeWidth="1.3"
    />
  </IconSvg>
);

function App() {
  return (
    <Page>
      <GlobalStyle />
      <MenuBar>
        {menus.map((m) => (
          <span key={m}>{m}</span>
        ))}
      </MenuBar>

      <ToolRow>
        <ToolGroups groups={topIcons} pitch={30.8} sep={6.8} />
        <BarSep />
      </ToolRow>

      <PropRow>
        <CoordGrid>
          <CoordLabel>X</CoordLabel>
          <FlatInput>0</FlatInput>
          <Unit>mm</Unit>
          <Toggle><ToggleIcon /></Toggle>
          <FlatInput>0</FlatInput>
          <Unit>mm</Unit>
          <CoordLabel>Y</CoordLabel>
          <FlatInput>0</FlatInput>
          <Unit>mm</Unit>
          <Toggle><ToggleIcon vertical /></Toggle>
          <FlatInput>0</FlatInput>
          <Unit>mm</Unit>
        </CoordGrid>
        <BarSep $w={2} />
        <PercentGrid>
          <FlatInput>0</FlatInput>
          <Percent>%</Percent>
          <FlatInput>0</FlatInput>
          <Percent>%</Percent>
        </PercentGrid>
        <IconCell $w={24}>
          <Ic s={25}>
            <rect x="3" y="13" width="20" height="13" fill="#0c0c0c" stroke="#999" />
            <path d="M6 13V6q0-4 5-4h4q5 0 5 4v3" fill="none" stroke="#111" strokeWidth="2.4" />
          </Ic>
        </IconCell>
        <IconCell $w={23}>
          <Ic s={25}>
            <rect x="2" y="2" width="24" height="24" fill="#fff" stroke="#333" strokeWidth="1.4" />
            <path d="M10 2v24M18 2v24M2 10h24M2 18h24" stroke="#333" />
            <rect x="10" y="10" width="8" height="8" fill="#222" />
          </Ic>
        </IconCell>
        <BarSep $w={12} />
        <RotateGroup>
          <IconCell $w={24}>
            <Ic s={22}>
              <path d="M22 8A10 10 0 1 0 24 14" fill="none" stroke="#111" strokeWidth="1.6" />
              <path d="M17 13h10l-5 6z" fill="#111" />
            </Ic>
          </IconCell>
          <FlatInput $h={20} $w={39}>0</FlatInput>
          <Degree>°</Degree>
          <ProcessLabel>Process NO:</ProcessLabel>
          <FlatInput $h={20} $w={41}>0</FlatInput>
        </RotateGroup>
        <BarSep $w={9.5} />
        <ToolGroups groups={alignIcons} pitch={31} sep={6} />
      </PropRow>

      <Main>
        <SideBar>
          {sideLayout.map((name, i) =>
            name ? (
              <SideButton key={i} $active={name === "arrow"}>
                {sideIcons[name]}
              </SideButton>
            ) : (
              <SideSep key={i} />
            )
          )}
        </SideBar>

        <Workspace>
          <HorizontalRuler />
          <VerticalRuler />
          <Drawing />
          <VScroll>
            <Chevron up w={2} />
            <VThumb />
            <Chevron w={2} />
          </VScroll>
          <HScroll>
            <Chevron left w={2} c="#666" />
            <HThumb />
            <Chevron right w={2} c="#666" />
          </HScroll>
        </Workspace>

        <Dock>
          <DockPane $h={640}>
            <Grip>
              <CloseMark>x</CloseMark>
            </Grip>
            <TabStrip>
              {tabs.map(([t, w], i) => (
                <Tab key={t} $w={w} $active={i === 0}>
                  {t}
                </Tab>
              ))}
            </TabStrip>
            <TableFrame>
              {["Layer", "Mode", "Output", "Hide"].map((h, i) => (
                <HeadCell key={h} $lead={i === 0}>{h}</HeadCell>
              ))}
              {Array.from({ length: 8 }).map((_, r) => {
                const layer = layers[r];
                return (
                  <React.Fragment key={r}>
                    <BodyCell $color={layer?.color} />
                    <BodyCell $sel={layer?.sel}>{layer?.mode}</BodyCell>
                    <BodyCell $sel={layer?.sel}>{layer && "Yes"}</BodyCell>
                    <BodyCell $sel={layer?.sel}>{layer && "No"}</BodyCell>
                  </React.Fragment>
                );
              })}
            </TableFrame>
            <PropFrame>
              <PropLabel>Color</PropLabel>
              <PropValue>
                <ColorBar />
              </PropValue>
              {params.map(([k, v]) => (
                <React.Fragment key={k}>
                  <PropLabel>{k}</PropLabel>
                  <PropValue>{v}</PropValue>
                </React.Fragment>
              ))}
            </PropFrame>
            <LaserRow>
              <PanelButton $w={66} $h={19}>Laser1</PanelButton>
              <PanelButton $w={66} $h={19}>Laser2</PanelButton>
              <PanelButton $w={66} $h={19} $off>Laser3</PanelButton>
              <PanelButton $w={66} $h={19} $off>Laser4</PanelButton>
            </LaserRow>
            <GroupBox $w={279} $h={104} $top={3} $left={4}>
              <GroupTitle>Line/column setup</GroupTitle>
              <SetupGrid>
                <span />
                <ColTitle>Num</ColTitle>
                <ColTitle>space</ColTitle>
                <ColTitle>Dislocation</ColTitle>
                <ColTitle>Mirror</ColTitle>
                <RowMark>X:</RowMark>
                <FlatInput $h={20}>1</FlatInput>
                <FlatInput $h={20}>0.000</FlatInput>
                <FlatInput $h={20}>0.000</FlatInput>
                <MirrorBox>
                  {["H", "V", "H", "V"].map((m, i) => (
                    <MirrorItem key={i}>
                      <CheckBox $off />
                      {m}
                    </MirrorItem>
                  ))}
                </MirrorBox>
                <RowMark>Y:</RowMark>
                <FlatInput $h={20}>1</FlatInput>
                <FlatInput $h={20}>0.000</FlatInput>
                <FlatInput $h={20}>0.000</FlatInput>
              </SetupGrid>
              <ArrayRow>
                <ArrayIcon>
                  <Ic s={25}>
                    <rect x="1" y="1" width="26" height="26" fill="#fff" stroke="#000" strokeWidth="2" />
                    <path d="M4 5h19M4 5v18" stroke="#2030d0" strokeWidth="1.2" />
                    <path d="M8 10h14M8 15h14M8 20h14" stroke="#00b0c8" strokeWidth="3" strokeDasharray="3.5 1.2" />
                  </Ic>
                </ArrayIcon>
                <PanelButton $w={79} $h={25} $off>Virtual array</PanelButton>
                <PanelButton $w={76} $h={25} $off>Bestrew...</PanelButton>
                <PanelButton $w={76} $h={25} $off>Adjust</PanelButton>
              </ArrayRow>
            </GroupBox>
          </DockPane>

          <DockPane $h={244}>
            <Grip>
              <CloseMark>x</CloseMark>
            </Grip>
            <GroupBox $w={290} $h={150} $top={1}>
              <GroupTitle>Laser work</GroupTitle>
              <WorkGrid>
                <PanelButton>Start</PanelButton>
                <PanelButton>Pause/Continue</PanelButton>
                <PanelButton>Stop</PanelButton>
                <PanelButton>SaveToUFile</PanelButton>
                <PanelButton>UFileOutput</PanelButton>
                <PanelButton>Download</PanelButton>
              </WorkGrid>
              <PositionRow>
                <PositionLabel>Position:</PositionLabel>
                <SelectBox>
                  Current position
                  <Chevron size={9} />
                </SelectBox>
              </PositionRow>
              <ScaleArea>
                <CheckColumn>
                  <CheckLine><CheckBox />Path optimize</CheckLine>
                  <CheckLine><CheckBox />Output select graphics</CheckLine>
                  <CheckLine $off $indent><CheckBox $off />Selected graphics position</CheckLine>
                </CheckColumn>
                <ScaleColumn>
                  <PanelButton $w={70}>Cut scale</PanelButton>
                  <PanelButton $w={70}>Go scale</PanelButton>
                </ScaleColumn>
              </ScaleArea>
            </GroupBox>
            <GroupBox $w={290} $h={46} $top={6}>
              <GroupTitle>Device</GroupTitle>
              <DeviceRow>
                <PanelButton $w={91}>Port setting</PanelButton>
                <SelectBox>
                  Device---(USB:Auto)
                  <Chevron size={9} />
                </SelectBox>
              </DeviceRow>
            </GroupBox>
          </DockPane>
        </Dock>
      </Main>

      <BottomBar>
        <PaletteGrip>x</PaletteGrip>
        <Swatches>
          {swatches.map((c) => (
            <Swatch key={c} $c={c} />
          ))}
        </Swatches>
      </BottomBar>
    </Page>
  );
}

export default App;
